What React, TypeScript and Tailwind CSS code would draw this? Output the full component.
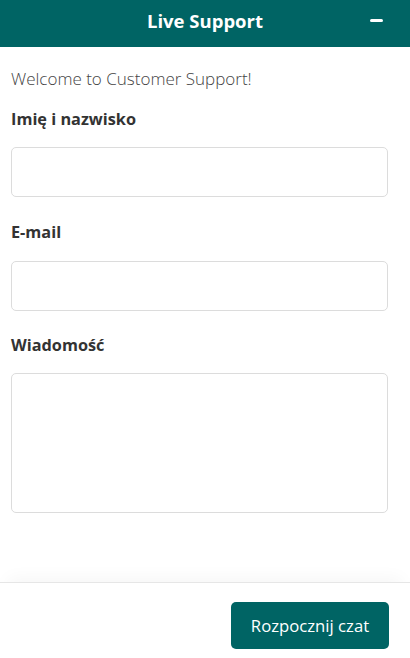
export default function App() {
    return (
        <div className="flex h-[658px] w-[410px] flex-col bg-white font-['Open_Sans',sans-serif]">
            <div className="relative flex h-[47px] shrink-0 items-center justify-center bg-[#006464] pb-[6px]">
                <span className="text-[18.5px] font-bold text-white">Live Support</span>
                <button className="absolute right-[27px] top-[19px] h-[3px] w-[13px] rounded-sm bg-white" />
            </div>
            <div className="flex flex-1 flex-col pl-[11px] pr-[22px] pt-[20px]">
                <p className="mb-[16px] text-[17px] font-light leading-[24px] text-[#444]">
                    Welcome to Customer Support!
                </p>
                <label className="mb-[16px] text-[16.3px] font-bold leading-[24px] text-[#333]">Imię i nazwisko</label>
                <input className="mb-[23px] h-[50px] w-full rounded-[5px] border border-[#dcdcdc] px-3 outline-none" />
                <label className="mb-[17px] text-[16.3px] font-bold leading-[24px] text-[#333]">E-mail</label>
                <input className="mb-[22px] h-[50px] w-full rounded-[5px] border border-[#dcdcdc] px-3 outline-none" />
                <label className="mb-[16px] text-[16.3px] font-bold leading-[24px] text-[#333]">Wiadomość</label>
                <textarea className="h-[140px] w-full resize-none rounded-[5px] border border-[#dcdcdc] px-3 outline-none" />
            </div>
            <div className="flex h-[76px] shrink-0 items-start justify-end border-t border-[#e6e6e6] px-[21px] pt-[19px] shadow-[0_-12px_16px_-8px_rgba(0,0,0,0.04)]">
                <button className="h-[47px] w-[158px] rounded-[5px] bg-[#006464] text-[16.7px] text-white">
                    Rozpocznij czat
                </button>
            </div>
        </div>
    )
}
